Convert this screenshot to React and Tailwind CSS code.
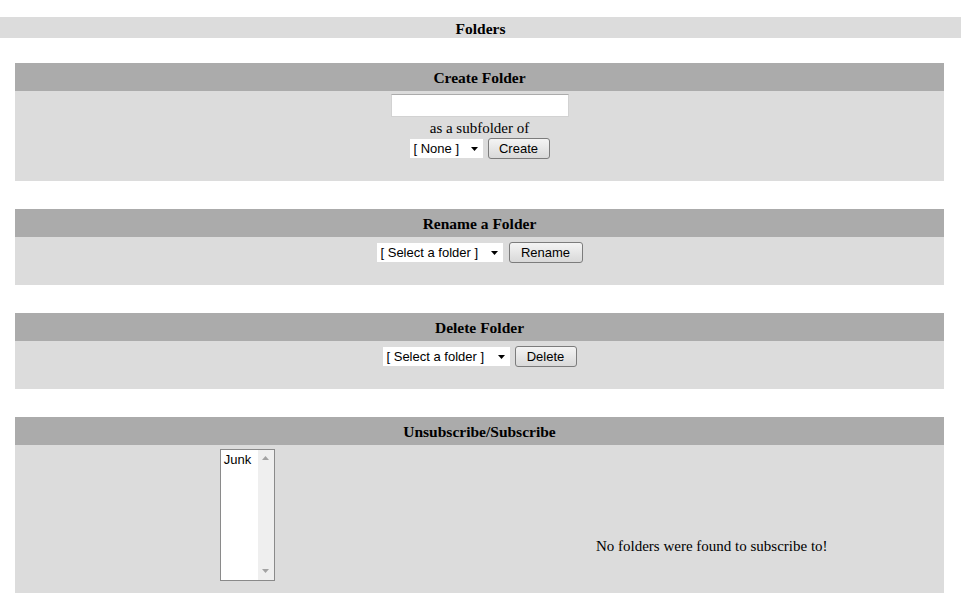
import React from "react";

const serif = { fontFamily: '"Liberation Serif", "Times New Roman", serif' };
const sans = { fontFamily: '"Liberation Sans", Arial, sans-serif' };

function Arrow() {
  return (
    <svg width="7" height="4" viewBox="0 0 7 4" className="shrink-0">
      <path d="M0 0 L7 0 L3.5 4 Z" fill="#000" />
    </svg>
  );
}

function FakeSelect({ label, width }) {
  return (
    <div
      className="h-[19px] bg-white flex items-center justify-between pl-[4px] pr-[5px] text-[13px] text-black leading-none"
      style={{ ...sans, width }}
    >
      <span className="whitespace-nowrap">{label}</span>
      <Arrow />
    </div>
  );
}

function Btn({ label, width }) {
  return (
    <div
      className="h-[21px] border border-[#7c7c7c] rounded-[3px] bg-linear-to-b from-[#f4f4f4] to-[#d9d9d9] flex items-center justify-center text-[13px] text-black leading-none"
      style={{ ...sans, width }}
    >
      {label}
    </div>
  );
}

function Header({ title }) {
  return (
    <div
      className="h-[28px] pt-[2px] bg-[#ababab] flex items-center justify-center font-bold text-[15.5px] text-black"
      style={serif}
    >
      {title}
    </div>
  );
}

export default function App() {
  return (
    <div className="w-[961px] h-[593px] overflow-hidden bg-white" style={serif}>
      <div className="mt-[17px] h-[21px] pt-[2px] bg-[#dcdcdc] flex items-center justify-center font-bold text-[15.5px] text-black">
        Folders
      </div>

      {/* Create Folder */}
      <div className="ml-[15px] w-[929px] mt-[25px]">
        <Header title="Create Folder" />
        <div className="h-[90px] bg-[#dcdcdc] flex flex-col items-center">
          <div className="mt-[3px] w-[178px] h-[23px] bg-white border border-[#d2d2d2] border-t-[#ababab]" />
          <div className="mt-[3px] leading-[17px] text-[15px] text-black">as a subfolder of</div>
          <div className="mt-[1px] h-[21px] flex items-center gap-[5px]">
            <FakeSelect label="[ None ]" width={73} />
            <Btn label="Create" width={62} />
          </div>
        </div>
      </div>

      {/* Rename */}
      <div className="ml-[15px] w-[929px] mt-[28px]">
        <Header title="Rename a Folder" />
        <div className="h-[48px] bg-[#dcdcdc] flex justify-center">
          <div className="mt-[5px] h-[21px] flex items-center gap-[6px]">
            <FakeSelect label="[ Select a folder ]" width={126} />
            <Btn label="Rename" width={74} />
          </div>
        </div>
      </div>

      {/* Delete */}
      <div className="ml-[15px] w-[929px] mt-[28px]">
        <Header title="Delete Folder" />
        <div className="h-[48px] bg-[#dcdcdc] flex justify-center">
          <div className="mt-[5px] h-[21px] flex items-center gap-[5px]">
            <FakeSelect label="[ Select a folder ]" width={127} />
            <Btn label="Delete" width={62} />
          </div>
        </div>
      </div>

      {/* Unsubscribe/Subscribe */}
      <div className="ml-[15px] w-[929px] mt-[28px]">
        <Header title="Unsubscribe/Subscribe" />
        <div className="h-[202px] bg-[#dcdcdc] grid grid-cols-2">
          <div className="flex justify-center items-start pt-[4px]">
            <div className="w-[55px] h-[132px] border border-[#8a8a8a] bg-white flex">
              <div className="flex-1 pl-[3px] pt-[2px] text-[13px] leading-[15px] text-black" style={sans}>
                Junk
              </div>
              <div className="w-[16px] bg-[#efefef] flex flex-col items-center justify-between pt-[6px] pb-[7px]">
                <svg width="7" height="4" viewBox="0 0 7 4">
                  <path d="M0 4 L7 4 L3.5 0 Z" fill="#a3a3a3" />
                </svg>
                <svg width="7" height="4" viewBox="0 0 7 4">
                  <path d="M0 0 L7 0 L3.5 4 Z" fill="#a3a3a3" />
                </svg>
              </div>
            </div>
          </div>
          <div className="flex items-center justify-center text-[15px] text-black">
            No folders were found to subscribe to!
          </div>
        </div>
      </div>
    </div>
  );
}
